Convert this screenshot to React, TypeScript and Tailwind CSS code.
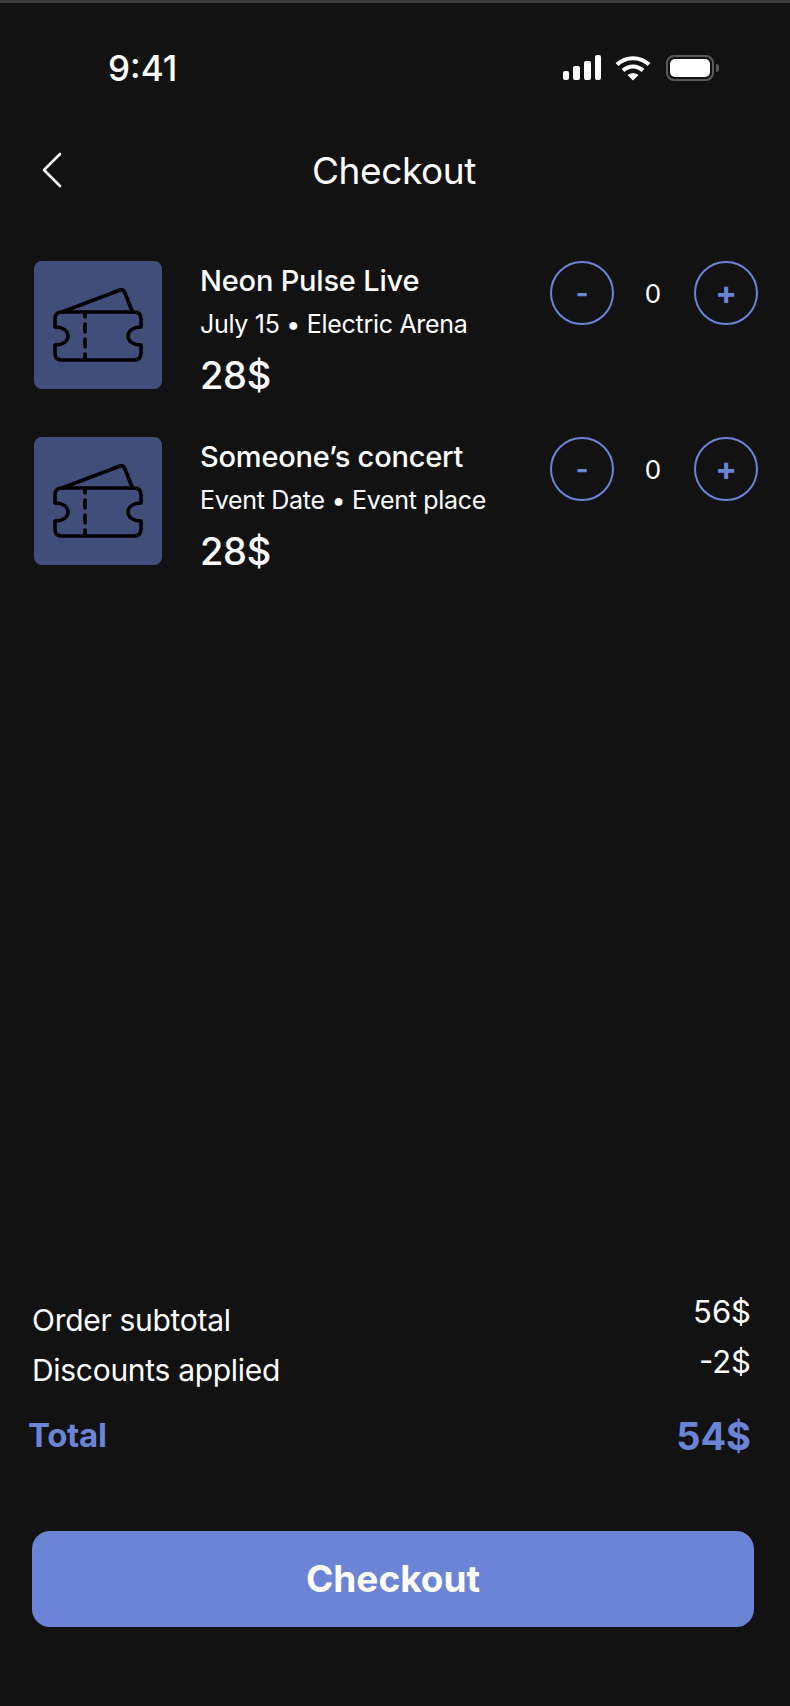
const TicketIcon = () => (
  <svg width="128" height="128" viewBox="0 0 128 128" fill="none" stroke="#000" strokeWidth="3.600" strokeLinecap="round" strokeLinejoin="round">
    <path d="M28 51H100Q107 51 107 58V66C99 66 94 70 94 75S99 84 107 84V92Q107 99 100 99H28Q21 99 21 92V84C29 84 34 80 34 75S29 66 21 66V58Q21 51 28 51Z" />
    <path d="M28 51L86 29Q90 28 91 32L98.500 51" />
    <path d="M51 52V56M51 63V71M51 78V86M51 93V98" />
  </svg>
);

const CircleButton = ({ label, big }: { label: string; big?: boolean }) => (
  <button
    className={`w-[64px] h-[64px] rounded-full border-2 border-[#6b84d6] flex items-center justify-center font-bold leading-none text-[#6b84d6] ${
      big ? "text-[32px]" : "text-[28px]"
    }`}
  >
    {label}
  </button>
);

const CartItem = ({ title, info }: { title: string; info: string }) => (
  <div className="flex items-start h-[128px]">
    <div className="w-[128px] h-[128px] rounded-lg bg-[#424e7a] shrink-0">
      <TicketIcon />
    </div>
    <div className="ml-[38px] w-[350px] mt-[2px]">
      <div className="text-[29px] leading-[36px] font-medium tracking-[-0.2px]">{title}</div>
      <div className="text-[25px] leading-[36px] mt-[7px] tracking-[-0.3px]">{info}</div>
      <div className="text-[38px] leading-[44px] font-medium tracking-[-0.3px] mt-[11px]">28$</div>
    </div>
    <div className="flex items-center">
      <CircleButton label="-" />
      <span className="w-[80px] text-center text-[26px] pr-[2px]">0</span>
      <CircleButton label="+" big />
    </div>
  </div>
);

const StatusIcons = () => (
  <div className="flex items-center">
    <svg width="40" height="26" viewBox="0 0 40 26" fill="#fff">
      <rect x="1" y="16" width="6" height="9" rx="2" />
      <rect x="11" y="11" width="7" height="14" rx="2" />
      <rect x="22" y="6" width="7" height="19" rx="2" />
      <rect x="33" y="0" width="6" height="25" rx="2" />
    </svg>
    <svg width="36" height="26" viewBox="0 0 36 26" fill="none" stroke="#fff" strokeWidth="4" className="ml-[13px]">
      <path d="M2 9.500C11 1 25 1 34 9.500" />
      <path d="M8 15.500C14 10 22 10 28 15.500" />
      <path d="M12.500 20L18 25.500L23.500 20C20 17.500 16 17.500 12.500 20Z" fill="#fff" stroke="none" />
    </svg>
    <div className="ml-[15px] w-[48px] h-[26px] rounded-lg border-2 border-[#5a5a5a] p-[2px]">
      <div className="w-full h-full rounded-[5px] bg-white" />
    </div>
    <div className="ml-[2px] w-[3px] h-[8px] rounded-r-full bg-[#5a5a5a]" />
  </div>
);

export default function App() {
  return (
    <div className="w-[790px] h-[1706px] bg-[#121212] text-white font-[Inter,sans-serif] flex flex-col border-t-[3px] border-[#3a3a3a] overflow-hidden">
      {/* Status bar */}
      <div className="flex items-center justify-between h-[26px] mt-[52px] pl-[108px] pr-[71px]">
        <span className="text-[35px] leading-none font-medium">9:41</span>
        <StatusIcons />
      </div>

      {/* Header */}
      <div className="relative flex items-center justify-center h-[44px] mt-[67px] pr-[2px]">
        <svg width="24" height="36" viewBox="0 0 24 36" fill="none" stroke="#fff" strokeWidth="2.600" strokeLinecap="round" strokeLinejoin="round" className="absolute left-[40px]">
          <path d="M20 2L4 18L20 34" />
        </svg>
        <h1 className="text-[37px] leading-none font-normal tracking-[-0.4px]">Checkout</h1>
      </div>

      {/* Items */}
      <div className="flex flex-col gap-[48px] mt-[69px] pl-[34px]">
        <CartItem title="Neon Pulse Live" info="July 15 • Electric Arena" />
        <CartItem title="Someone’s concert" info="Event Date • Event place" />
      </div>

      <div className="flex-1" />

      {/* Summary */}
      <div className="flex justify-between items-start pl-[32px] pr-[39px]">
        <div className="flex flex-col pt-[8px]">
          <span className="text-[30px] leading-[36px] tracking-[-0.3px]">Order subtotal</span>
          <span className="text-[30px] leading-[36px] tracking-[-0.3px] mt-[14px]">Discounts applied</span>
          <span className="text-[33px] leading-[40px] font-bold tracking-[-0.3px] text-[#6b84d6] mt-[27px] -ml-[4px]">Total</span>
        </div>
        <div className="flex flex-col items-end">
          <span className="text-[31px] leading-[36px]">56$</span>
          <span className="text-[31px] leading-[36px] mt-[14px]">-2$</span>
          <span className="text-[38px] leading-[46px] font-bold text-[#6b84d6] mt-[33px]">54$</span>
        </div>
      </div>

      {/* Checkout button */}
      <button className="ml-[32px] mr-[36px] mt-[72px] mb-[79px] h-[96px] rounded-[18px] bg-[#6b84d6] text-[37px] font-bold">
        Checkout
      </button>
    </div>
  );
}
